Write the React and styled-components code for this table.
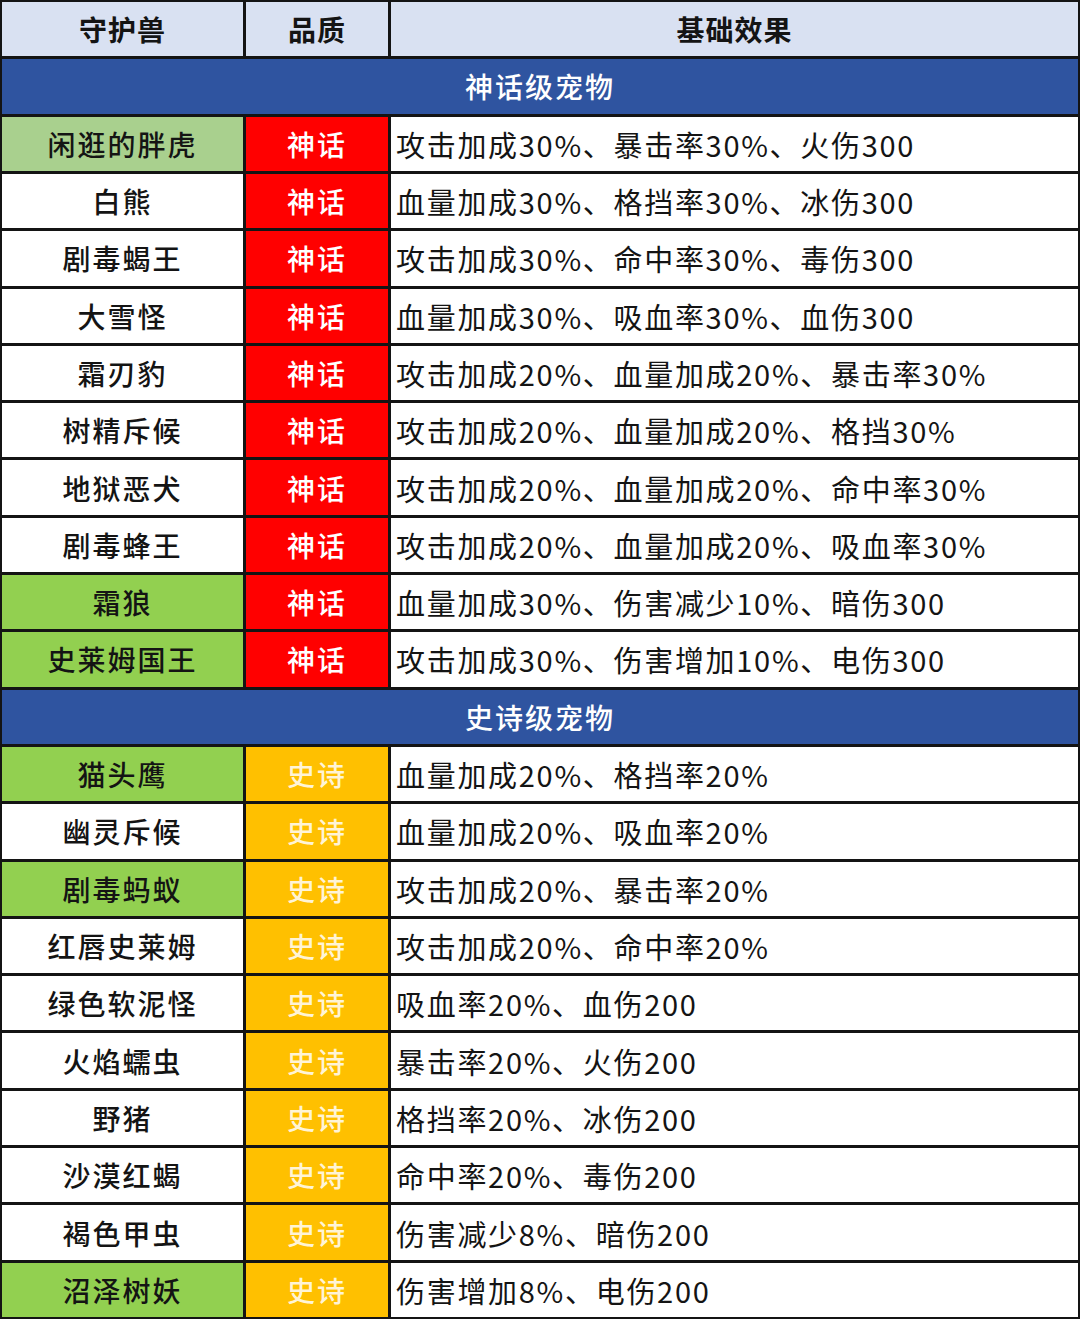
import React from 'react';
import styled, { createGlobalStyle } from 'styled-components';

const GlobalStyle = createGlobalStyle`
    html, body {
        margin: 0;
        padding: 0;
        background: #ffffff;
    }
    body {
        font-family: "Noto Sans CJK SC", "Noto Sans", sans-serif;
    }
`

const Table = styled.div`
    box-sizing: border-box;
    width: 1080px;
    height: 1319px;
    display: grid;
    grid-template-columns: 241px 142px 1fr;
    grid-template-rows: repeat(23, 1fr);
    gap: 3px;
    padding: 2px 2px 2px 2px;
    background: #141414;
`
const Cell = styled.div`
    display: flex;
    align-items: center;
    justify-content: center;
    background: ${props => props.bg || '#ffffff'};
    color: ${props => props.color || '#141414'};
    font-size: 28px;
    font-weight: 500;
    letter-spacing: 2px;
    white-space: nowrap;
    overflow: hidden;
`
const EffectCell = styled(Cell)`
    justify-content: flex-start;
    padding-left: 5px;
    font-size: 29px;
    font-weight: 400;
    letter-spacing: 1.7px;
`
const HeadCell = styled(Cell)`
    background: #d9e1f2;
    font-weight: 700;
    letter-spacing: 1px;
`
const Section = styled.div`
    grid-column: 1 / -1;
    display: flex;
    align-items: center;
    justify-content: center;
    background: #2f54a0;
    color: #ffffff;
    font-size: 28px;
    font-weight: 500;
    letter-spacing: 2px;
`

const GREEN = '#92d050';
const LIGHT_GREEN = '#a9d08e';

const quality = {
    myth: { label: '神话', bg: '#ff0000', color: '#ffffff' },
    epic: { label: '史诗', bg: '#ffc000', color: '#fff4d6' },
};

const groups = [
    {
        title: '神话级宠物',
        q: 'myth',
        rows: [
            ['闲逛的胖虎', '攻击加成30%、暴击率30%、火伤300', LIGHT_GREEN],
            ['白熊', '血量加成30%、格挡率30%、冰伤300'],
            ['剧毒蝎王', '攻击加成30%、命中率30%、毒伤300'],
            ['大雪怪', '血量加成30%、吸血率30%、血伤300'],
            ['霜刃豹', '攻击加成20%、血量加成20%、暴击率30%'],
            ['树精斥候', '攻击加成20%、血量加成20%、格挡30%'],
            ['地狱恶犬', '攻击加成20%、血量加成20%、命中率30%'],
            ['剧毒蜂王', '攻击加成20%、血量加成20%、吸血率30%'],
            ['霜狼', '血量加成30%、伤害减少10%、暗伤300', GREEN],
            ['史莱姆国王', '攻击加成30%、伤害增加10%、电伤300', GREEN],
        ],
    },
    {
        title: '史诗级宠物',
        q: 'epic',
        rows: [
            ['猫头鹰', '血量加成20%、格挡率20%', GREEN],
            ['幽灵斥候', '血量加成20%、吸血率20%'],
            ['剧毒蚂蚁', '攻击加成20%、暴击率20%', GREEN],
            ['红唇史莱姆', '攻击加成20%、命中率20%'],
            ['绿色软泥怪', '吸血率20%、血伤200'],
            ['火焰蠕虫', '暴击率20%、火伤200'],
            ['野猪', '格挡率20%、冰伤200'],
            ['沙漠红蝎', '命中率20%、毒伤200'],
            ['褐色甲虫', '伤害减少8%、暗伤200'],
            ['沼泽树妖', '伤害增加8%、电伤200', GREEN],
        ],
    },
];

const App = () => {
    return (
        <>
        <GlobalStyle />
        <Table>
            <HeadCell>守护兽</HeadCell>
            <HeadCell>品质</HeadCell>
            <HeadCell>基础效果</HeadCell>
            {groups.map((group) => {
                const q = quality[group.q];
                return (
                    <React.Fragment key={group.title}>
                        <Section>{group.title}</Section>
                        {group.rows.map(([name, effect, bg]) => (
                            <React.Fragment key={name}>
                                <Cell bg={bg}>{name}</Cell>
                                <Cell bg={q.bg} color={q.color}>{q.label}</Cell>
                                <EffectCell>{effect}</EffectCell>
                            </React.Fragment>
                        ))}
                    </React.Fragment>
                )
            })}
        </Table>
        </>
    )
}

export default App;
